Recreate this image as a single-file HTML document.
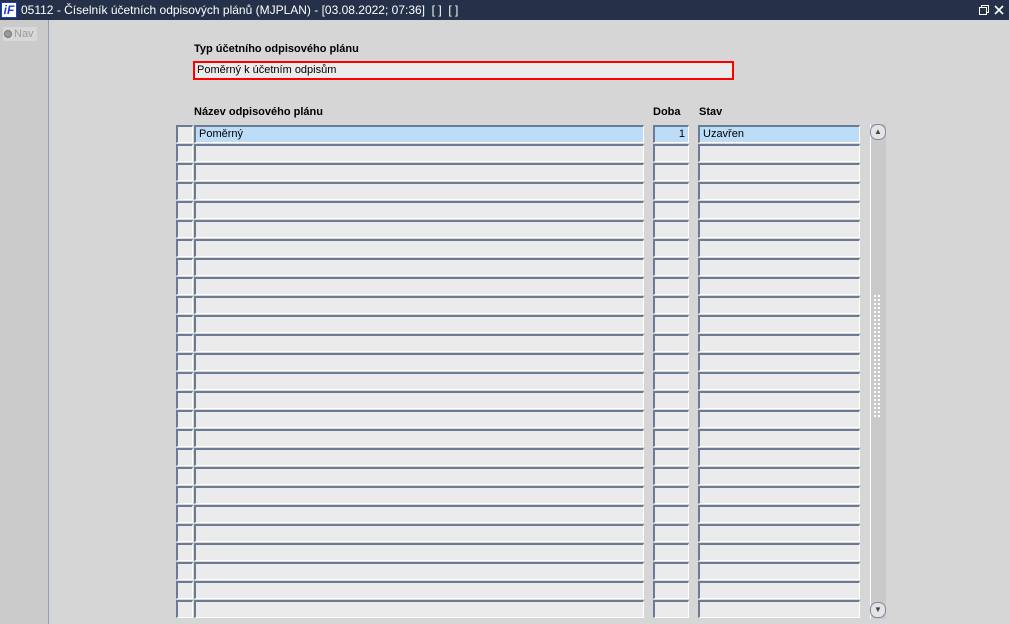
<!DOCTYPE html>
<html><head><meta charset="utf-8"><style>
*{margin:0;padding:0;box-sizing:border-box}
body{width:1009px;height:624px;background:#d6d6d6;font-family:"Liberation Sans",Arial,sans-serif;font-size:11px;color:#000;position:relative;overflow:hidden}
.tb{position:absolute;left:0;top:0;width:1009px;height:20px;background:#243149;color:#fff;font-size:12px;line-height:20px}
.logo{position:absolute;left:1px;top:2px;width:16px;height:16px;background:#fff;border:1px solid #1a3fd0;color:#1a3fd0;font:bold italic 12px/14px "Liberation Sans",sans-serif;text-align:center}
.nav{position:absolute;left:0;top:20px;width:49px;height:604px;background:#cbcbcb;border-right:1px solid #8fa0b5}
.f{position:absolute;height:18px;background:#ebebeb;border-top:2px solid #6b7b96;border-left:2px solid #6b7b96;border-right:1px solid #fff;border-bottom:1px solid #fff;line-height:15px;padding-left:3px;white-space:nowrap}
.sel{background:#bcdcf8}
.lb{position:absolute;font-weight:bold;font-size:11px}
</style></head><body>
<div class="tb"><div class="logo">iF</div><span style="position:absolute;left:21px">05112 - Číselník účetních odpisových plánů (MJPLAN) - [03.08.2022; 07:36] &nbsp;[ ] &nbsp;[ ]</span>
<svg style="position:absolute;left:978px;top:3px" width="28" height="14"><rect x="1.5" y="4.5" width="7" height="7" fill="none" stroke="#fff"/><path d="M3.5 4.5V2.5h7v7h-2" fill="none" stroke="#fff"/><path d="M17 3l8 8M25 3l-8 8" stroke="#fff" stroke-width="1.6"/></svg></div>
<div class="nav"><div style="position:absolute;left:3px;top:7px;width:34px;height:14px;background:#d8d8d8;color:#999;font-size:11px;line-height:14px"><span style="display:inline-block;width:8px;height:8px;border-radius:50%;background:#999;border:1px solid #777;margin:0 2px 0 1px;vertical-align:-1px"></span>Nav</div></div>
<div class="lb" style="left:194px;top:43px">Typ účetního odpisového plánu</div>
<div style="position:absolute;left:193px;top:61px;width:541px;height:19px;background:#ebebeb;border:2px solid #f00;padding-left:2px;line-height:15px">Poměrný k účetním odpisům</div>
<div class="lb" style="left:194px;top:106px">Název odpisového plánu</div>
<div class="lb" style="left:653px;top:106px">Doba</div>
<div class="lb" style="left:699px;top:106px">Stav</div>
<div id="rows"></div>
<div style="position:absolute;left:870px;top:124px;width:16px;height:495px;background:#cacaca;border-left:1px solid #fff"></div>
<div style="position:absolute;left:870px;top:124px;width:16px;height:16px;border:1px solid #7a8aa5;border-radius:7px;background:#e4e4e4;text-align:center;font-size:8px;line-height:13px;color:#444">▲</div>
<div style="position:absolute;left:870px;top:602px;width:16px;height:16px;border:1px solid #7a8aa5;border-radius:7px;background:#e4e4e4;text-align:center;font-size:8px;line-height:14px;color:#444">▼</div>
<div style="position:absolute;left:873px;top:294px;width:8px;height:124px;background-image:radial-gradient(#fff 1px,transparent 1.2px);background-size:4px 4px"></div>
<script>
var h='';for(var i=0;i<26;i++){var y=125+i*19,s=i==0?' sel':'';
h+='<div class="f" style="left:176px;top:'+y+'px;width:17px"></div>';
h+='<div class="f'+s+'" style="left:194px;top:'+y+'px;width:450px">'+(i==0?'Poměrný':'')+'</div>';
h+='<div class="f'+s+'" style="left:653px;top:'+y+'px;width:36px;text-align:right;padding-right:3px">'+(i==0?'1':'')+'</div>';
h+='<div class="f'+s+'" style="left:698px;top:'+y+'px;width:162px">'+(i==0?'Uzavřen':'')+'</div>';}
document.getElementById('rows').innerHTML=h;
</script>
</body></html>
